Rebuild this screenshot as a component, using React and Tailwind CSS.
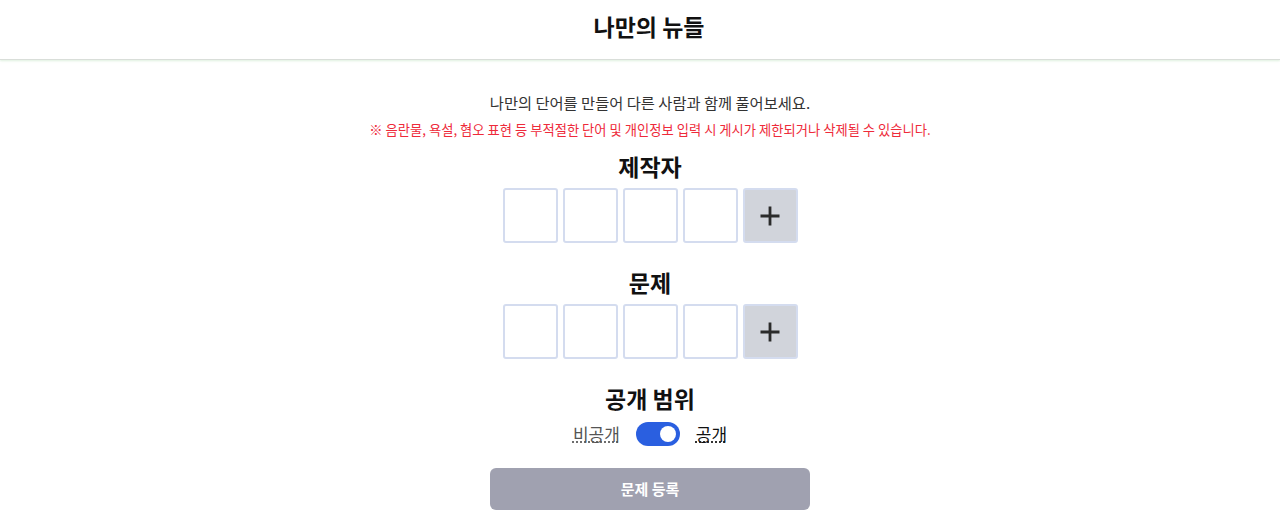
import React, { useState } from "react";

const font = { fontFamily: '"Noto Sans CJK KR", "Noto Sans", sans-serif' };

function Boxes() {
  return (
    <div className="flex gap-[5px]">
      {[0, 1, 2, 3].map((i) => (
        <div key={i} className="w-[55px] h-[55px] rounded-[3px] border-2 border-[#d4dcef] bg-white" />
      ))}
      <div className="w-[55px] h-[55px] rounded-[3px] border-2 border-[#d4dcef] bg-[#d1d4db] flex items-center justify-center">
        <svg width="22" height="22" viewBox="0 0 22 22">
          <path d="M11 1.5v19M1.5 11h19" stroke="#2b2b2b" strokeWidth="2.8" />
        </svg>
      </div>
    </div>
  );
}

export default function App() {
  const [on, setOn] = useState(true);
  return (
    <div className="w-[1280px] h-[519px] bg-white overflow-hidden" style={font}>
      <header className="h-[60px] pl-[18px] flex items-center justify-center border-b border-[#d9ded9] shadow-[0_1px_2px_rgba(200,230,200,0.6)]">
        <h1 className="text-[23px] font-bold text-[#111] leading-none -mt-[6px]">나만의 뉴들</h1>
      </header>
      <div className="flex flex-col items-center pl-[20px]">
        <p className="mt-[32px] text-[15.3px] leading-[20px] text-[#333]">나만의 단어를 만들어 다른 사람과 함께 풀어보세요.</p>
        <p className="mt-[10px] text-[13.3px] leading-[16px] text-[#ee2a3a]">※ 음란물, 욕설, 혐오 표현 등 부적절한 단어 및 개인정보 입력 시 게시가 제한되거나 삭제될 수 있습니다.</p>
        <h2 className="mt-[13px] text-[23px] font-bold leading-[30px] text-[#111]">제작자</h2>
        <div className="mt-[7px]"><Boxes /></div>
        <h2 className="mt-[24px] text-[23px] font-bold leading-[30px] text-[#111]">문제</h2>
        <div className="mt-[7px]"><Boxes /></div>
        <h2 className="mt-[24px] text-[23px] font-bold leading-[30px] text-[#111]">공개 범위</h2>
        <div className="mt-[9px] flex items-center gap-[16px]">
          <span className="text-[17px] leading-[22px] text-[#555] underline decoration-dotted">비공개</span>
          <button
            onClick={() => setOn(!on)}
            className="w-[44px] h-[24px] rounded-full bg-[#2a5fe0] flex items-center justify-end px-[4px]"
          >
            <span className="w-[16px] h-[16px] rounded-full bg-white" />
          </button>
          <span className="text-[17px] leading-[22px] text-[#111] underline decoration-dotted">공개</span>
        </div>
        <button className="mt-[22px] w-[320px] h-[42px] rounded-[6px] bg-[#a0a1b0] text-white text-[15px] font-bold">
          문제 등록
        </button>
      </div>
    </div>
  );
}
